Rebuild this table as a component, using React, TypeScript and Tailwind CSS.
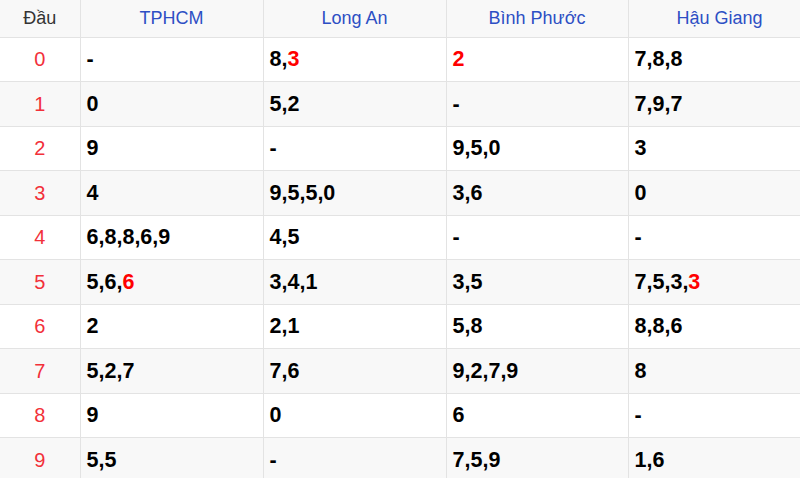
import React from "react";

type Cell = { v: string; hot?: number[] };

const cols = ["TPHCM", "Long An", "Bình Phước", "Hậu Giang"];

// each cell: comma list; hot = indices shown in red
const rows: Cell[][] = [
  [{ v: "-" }, { v: "8,3", hot: [1] }, { v: "2", hot: [0] }, { v: "7,8,8" }],
  [{ v: "0" }, { v: "5,2" }, { v: "-" }, { v: "7,9,7" }],
  [{ v: "9" }, { v: "-" }, { v: "9,5,0" }, { v: "3" }],
  [{ v: "4" }, { v: "9,5,5,0" }, { v: "3,6" }, { v: "0" }],
  [{ v: "6,8,8,6,9" }, { v: "4,5" }, { v: "-" }, { v: "-" }],
  [{ v: "5,6,6", hot: [2] }, { v: "3,4,1" }, { v: "3,5" }, { v: "7,5,3,3", hot: [3] }],
  [{ v: "2" }, { v: "2,1" }, { v: "5,8" }, { v: "8,8,6" }],
  [{ v: "5,2,7" }, { v: "7,6" }, { v: "9,2,7,9" }, { v: "8" }],
  [{ v: "9" }, { v: "0" }, { v: "6" }, { v: "-" }],
  [{ v: "5,5" }, { v: "-" }, { v: "7,5,9" }, { v: "1,6" }],
];

function Digits({ cell }: { cell: Cell }) {
  const parts = cell.v.split(",");
  return (
    <>
      {parts.map((p, i) => (
        <React.Fragment key={i}>
          {i > 0 && ","}
          <span className={cell.hot?.includes(i) ? "text-[#ff0000]" : ""}>{p}</span>
        </React.Fragment>
      ))}
    </>
  );
}

export default function App() {
  return (
    <div className="w-[800px] h-[478px] overflow-hidden bg-white font-['Liberation_Sans',Arial,sans-serif]">
      <table className="table-fixed border-collapse w-[811px]">
        <colgroup>
          <col className="w-[80px]" />
          <col className="w-[183px]" />
          <col className="w-[183px]" />
          <col className="w-[182px]" />
          <col className="w-[183px]" />
        </colgroup>
        <thead>
          <tr className="h-[37px] bg-[#f8f8f8]">
            <th className="border border-[#e3e3e3] border-t-0 border-l-0 font-normal text-[18px] text-[#333]">Đầu</th>
            {cols.map((c) => (
              <th key={c} className="border border-[#e3e3e3] border-t-0 font-normal text-[18px] text-[#2d4fc4]">
                {c}
              </th>
            ))}
          </tr>
        </thead>
        <tbody>
          {rows.map((r, i) => (
            <tr key={i} className={`h-[44.5px] ${i % 2 === 1 ? "bg-[#f8f8f8]" : "bg-white"}`}>
              <td className="border border-[#e3e3e3] border-l-0 text-center text-[20px] text-[#f2303a]">{i}</td>
              {r.map((c, j) => (
                <td key={j} className="border border-[#e3e3e3] px-[6px] text-[21.5px] font-bold text-black">
                  <Digits cell={c} />
                </td>
              ))}
            </tr>
          ))}
        </tbody>
      </table>
    </div>
  );
}
